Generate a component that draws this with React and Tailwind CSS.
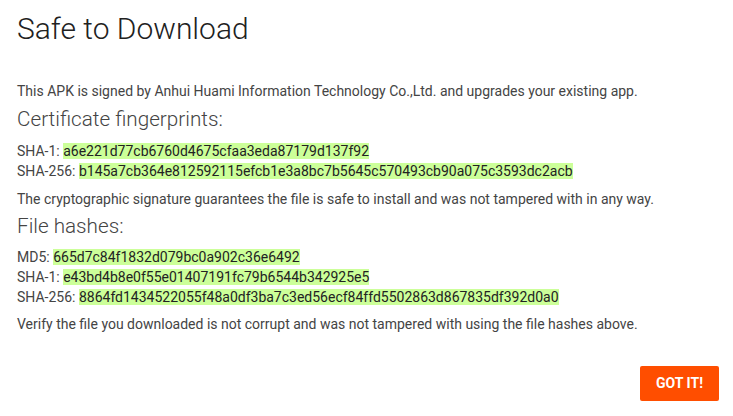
export default function App() {
  const hl = "bg-[#ccff99] text-[#222]";
  return (
    <div
      className="w-[733px] h-[416px] bg-white flex flex-col pl-[17px] pr-[14px] text-[#444]"
      style={{ fontFamily: "Roboto, 'Open Sans', sans-serif" }}
    >
      <h1 className="mt-[11px] text-[30px] leading-[36px] font-light text-[#212121]">
        Safe to Download
      </h1>
      <p className="mt-[34px] text-[14px] leading-[20px]">
        This APK is signed by Anhui Huami Information Technology Co.,Ltd. and upgrades your existing app.
      </p>
      <h2 className="mt-[6px] text-[20.7px] leading-[24px] font-light text-[#444]">
        Certificate fingerprints:
      </h2>
      <div className="mt-[10px] text-[14px] leading-[20px]">
        <div>
          SHA-1: <span className={hl}>a6e221d77cb6760d4675cfaa3eda87179d137f92</span>
        </div>
        <div>
          SHA-256: <span className={hl}>b145a7cb364e812592115efcb1e3a8bc7b5645c570493cb90a075c3593dc2acb</span>
        </div>
      </div>
      <p className="mt-[8px] text-[14px] leading-[20px]">
        The cryptographic signature guarantees the file is safe to install and was not tampered with in any way.
      </p>
      <h2 className="mt-[5px] text-[20.7px] leading-[24px] font-light text-[#444]">
        File hashes:
      </h2>
      <div className="mt-[9px] text-[14px] leading-[20px]">
        <div>
          MD5: <span className={hl}>665d7c84f1832d079bc0a902c36e6492</span>
        </div>
        <div>
          SHA-1: <span className={hl}>e43bd4b8e0f55e01407191fc79b6544b342925e5</span>
        </div>
        <div>
          SHA-256: <span className={hl}>8864fd1434522055f48a0df3ba7c3ed56ecf84ffd5502863d867835df392d0a0</span>
        </div>
      </div>
      <p className="mt-[7px] text-[14px] leading-[20px]">
        Verify the file you downloaded is not corrupt and was not tampered with using the file hashes above.
      </p>
      <div className="mt-auto mb-[15px] flex justify-end">
        <button className="w-[79px] h-[35px] rounded-[2px] bg-[#ff4e00] text-white text-[14px] font-bold uppercase">
          Got it!
        </button>
      </div>
    </div>
  );
}
